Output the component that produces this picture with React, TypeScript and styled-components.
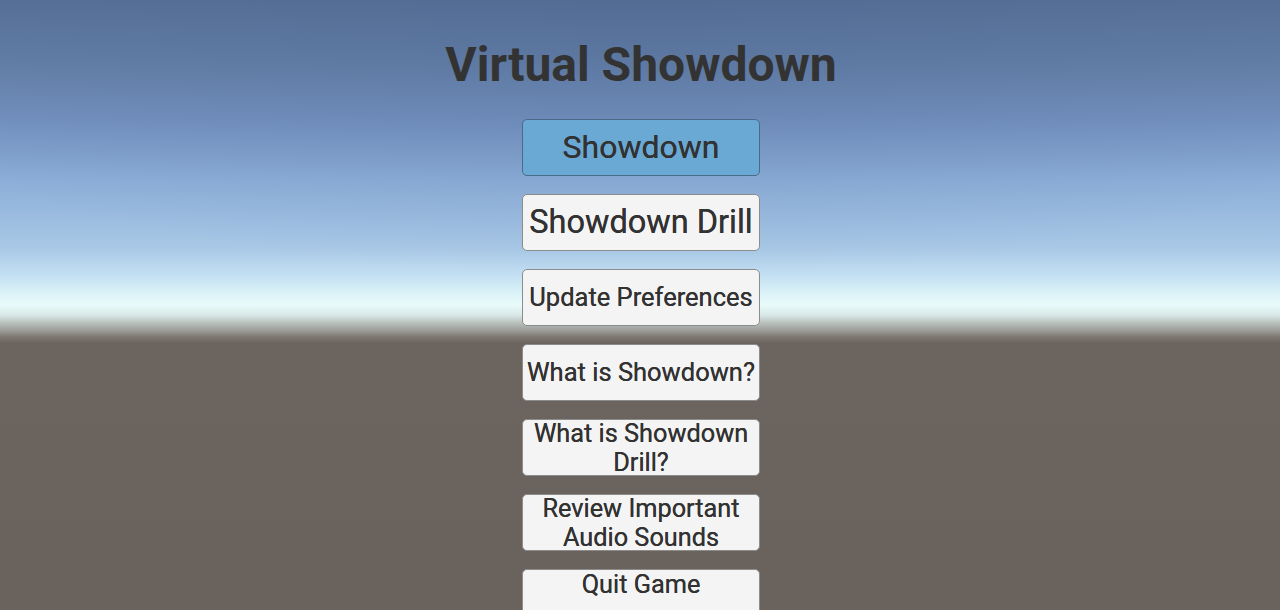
import styled, { createGlobalStyle } from 'styled-components';

const GlobalStyle = createGlobalStyle`
  html, body {
    margin: 0;
    padding: 0;
    background: #6a625d;
  }
  * {
    box-sizing: border-box;
  }
`;

type MenuItem = {
  label: string;
  size: number;
  active?: boolean;
  top?: boolean;
};

const items: MenuItem[] = [
  { label: 'Showdown', size: 32, active: true },
  { label: 'Showdown Drill', size: 32.5 },
  { label: 'Update Preferences', size: 25.5 },
  { label: 'What is Showdown?', size: 25.5 },
  { label: 'What is Showdown Drill?', size: 25.3 },
  { label: 'Review Important Audio Sounds', size: 25.3 },
  { label: 'Quit Game', size: 25.3, top: true },
];

const App = () => {
  return (
    <>
      <GlobalStyle />
      <Scene>
        <Title>Virtual Showdown</Title>
        <Menu>
          {items.map((item) => (
            <MenuButton key={item.label} $active={item.active} $size={item.size} $top={item.top}>
              <Label>{item.label}</Label>
            </MenuButton>
          ))}
        </Menu>
      </Scene>
    </>
  );
};
export default App;

// sky fades to a bright haze, then a soft horizon into flat ground
const Scene = styled.main`
  width: 100%;
  height: 610px;
  overflow: hidden;
  display: flex;
  flex-direction: column;
  align-items: center;
  padding: 37px 0 0 2px;
  font-family: Roboto, 'Liberation Sans', sans-serif;
  background:
    radial-gradient(ellipse 70% 45% at 50% 0%, rgba(70, 95, 140, 0.25), rgba(70, 95, 140, 0) 100%),
    linear-gradient(
      to bottom,
      #587096 0px,
      #627ea6 60px,
      #7391bf 120px,
      #8caed8 180px,
      #a8c8e6 248px,
      #c2def2 274px,
      #dcf3f8 294px,
      #e8fbfa 305px,
      #d8e8e6 315px,
      #b8c0bc 323px,
      #9a9a96 331px,
      #7e7772 337px,
      #6c645f 343px,
      #6a625d 610px
    );
`;

const Title = styled.h1`
  margin: 0;
  font-size: 48px;
  line-height: 56px;
  font-weight: 700;
  color: #333333;
`;

const Menu = styled.nav`
  display: flex;
  flex-direction: column;
  gap: 18px;
  margin-top: 26px;
`;

const MenuButton = styled.button<{ $active?: boolean; $size: number; $top?: boolean }>`
  width: 238px;
  height: 57px;
  padding: 0 4px;
  display: flex;
  align-items: ${(p) => (p.$top ? 'flex-start' : 'center')};
  justify-content: center;
  border-radius: 5px;
  border: 1px solid ${(p) => (p.$active ? '#4a6a88' : '#8c8c8c')};
  background: ${(p) => (p.$active ? '#6aa9d4' : '#f4f4f4')};
  color: #323232;
  font-family: Roboto, 'Liberation Sans', sans-serif;
  font-size: ${(p) => p.$size}px;
  font-weight: 400;
  line-height: 29px;
  text-shadow: 0 0 0.6px #323232;
  cursor: pointer;
`;

const Label = styled.span`
  display: block;
  text-align: center;
  white-space: normal;
`;
